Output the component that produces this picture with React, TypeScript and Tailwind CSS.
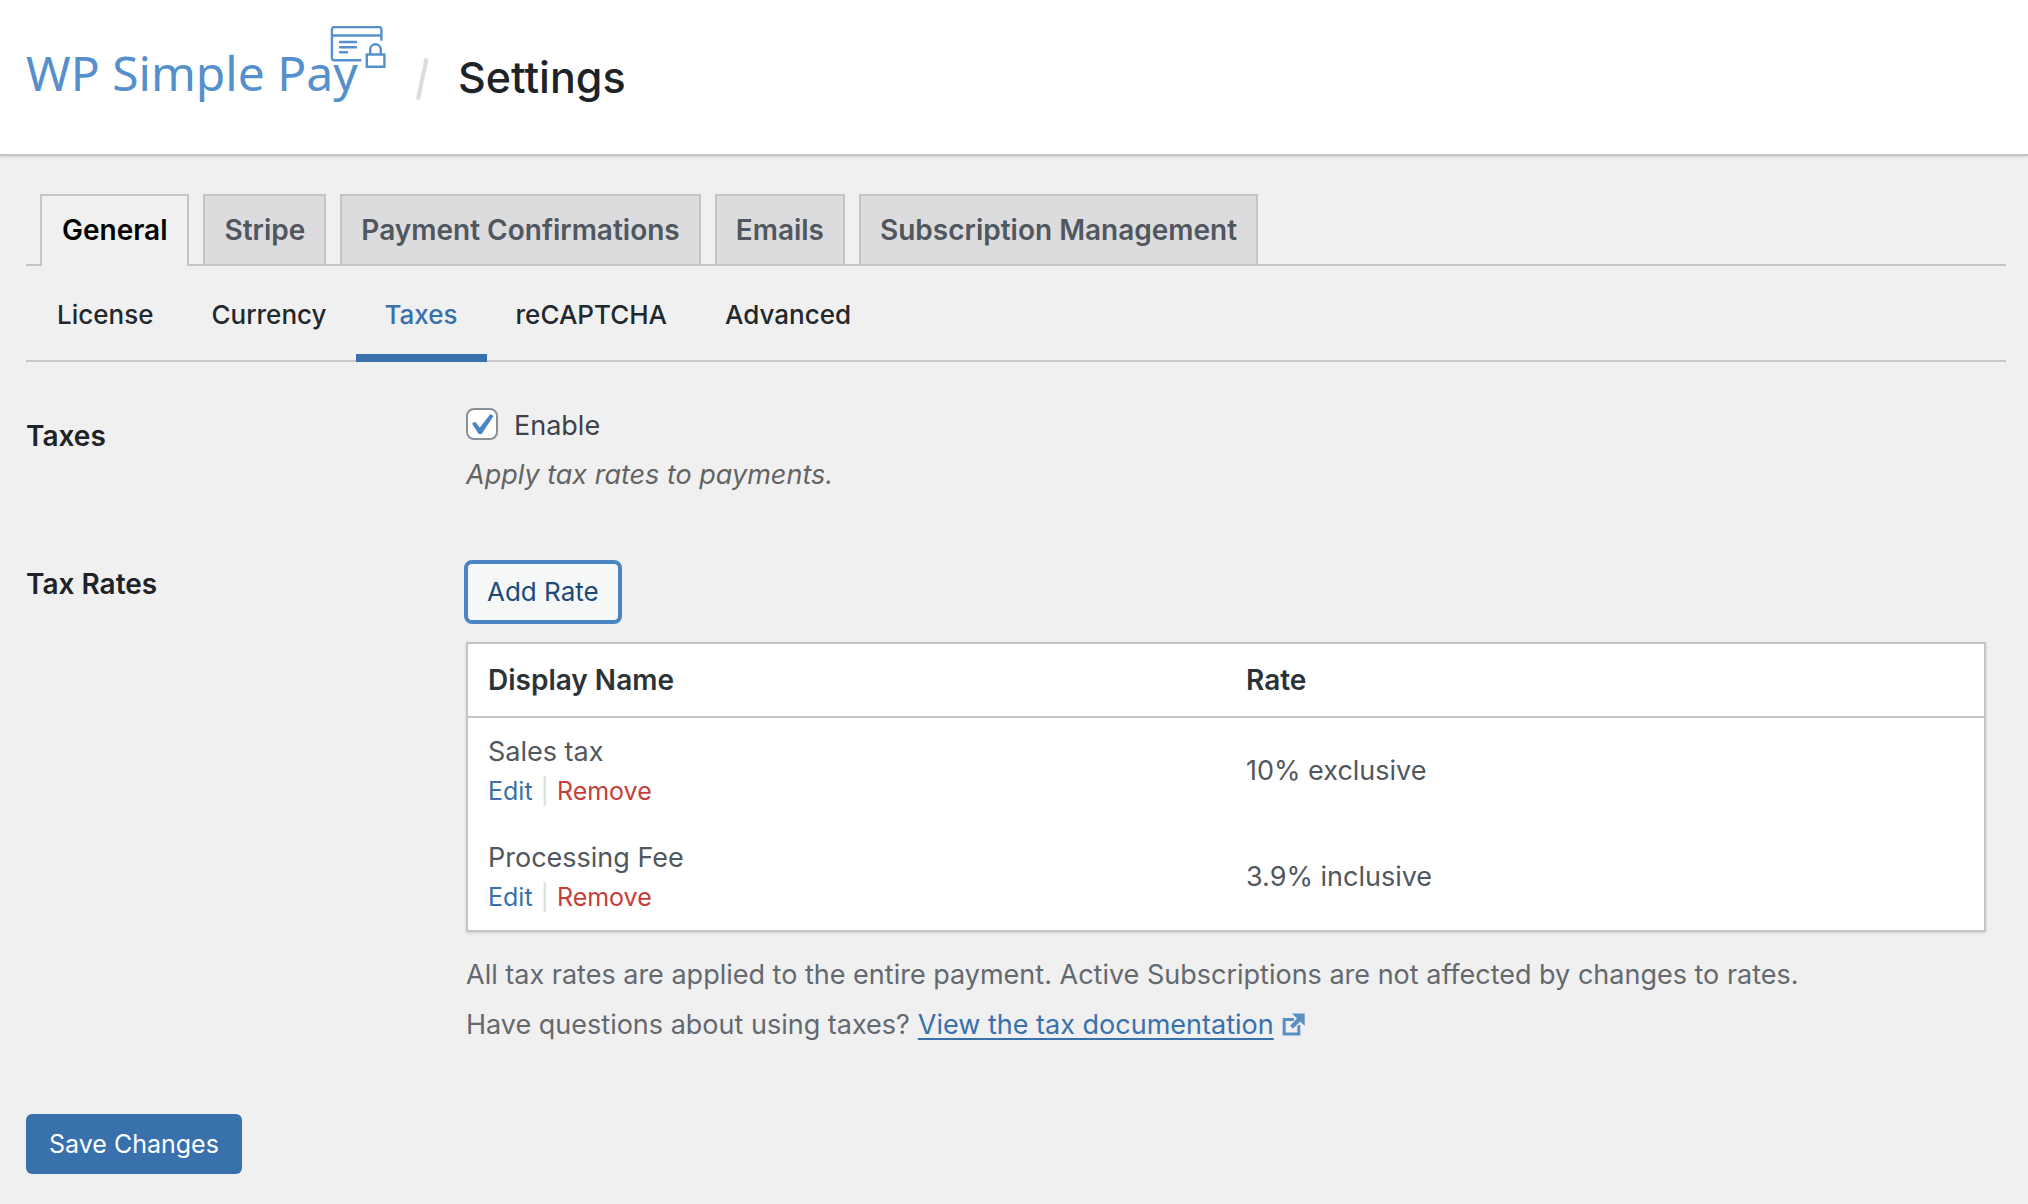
const tabs = ["General", "Stripe", "Payment Confirmations", "Emails", "Subscription Management"];
const sections = ["License", "Currency", "Taxes", "reCAPTCHA", "Advanced"];
const rates = [
  { name: "Sales tax", rate: "10% exclusive" },
  { name: "Processing Fee", rate: "3.9% inclusive" },
];

function CardLockIcon() {
  return (
    <svg
      viewBox="0 0 56 42"
      className="absolute top-[3px] right-0 h-[42px] w-14"
      fill="none"
      stroke="#5590cc"
      strokeWidth="2.4"
      aria-hidden="true"
    >
      <path d="M31.300 34.300H4.400a2.500 2.500 0 0 1-2.500-2.500V3.500a2.500 2.500 0 0 1 2.500-2.500h44.500a2.500 2.500 0 0 1 2.500 2.500V14.700" />
      <path d="M2 9.500h49.400" />
      <path d="M10 16h16M10 21.300h16M10 26.300h7" strokeLinecap="round" />
      <path d="M36.800 28.500h17.600v12.200h-17.600z" />
      <path d="M40.200 28v-4.500a5.300 5.300 0 0 1 10.600 0v4.500" />
    </svg>
  );
}

function ExternalIcon() {
  return (
    <svg viewBox="0 0 24 24" className="h-6 w-6" fill="none" aria-hidden="true">
      <path d="M12 6.500H2.200v14.500h14.600V12" stroke="#5b8fc4" strokeWidth="3" />
      <path
        d="M10 0.500H22.700V13L18.200 8.600L11 15.800L8 12.800L15 5.400z"
        fill="#5b8fc4"
        stroke="#f0f0f0"
        strokeWidth="2"
        paintOrder="stroke"
      />
    </svg>
  );
}

export default function App() {
  return (
    <div className="min-h-screen bg-[#f0f0f0] font-['Inter',sans-serif] text-[27px] leading-10 text-[#3c434a]">
      <header className="flex h-[156px] items-center border-b-2 border-[#c3c4c7] bg-white px-[26px] shadow-sm">
        <div className="relative w-[360px] pt-5 pb-7">
          <span className="block font-['Noto_Sans',sans-serif] text-[48px] leading-[60px] whitespace-nowrap text-[#5590cc]">
            WP Simple Pay
          </span>
          <CardLockIcon />
        </div>
        <svg viewBox="0 0 14 42" className="mt-1 ml-[29px] h-[42px] w-3.5" aria-hidden="true">
          <path d="M3 41.500L11.500 0.500" stroke="#dcdcde" strokeWidth="4" />
        </svg>
        <h1 className="ml-[29px] text-[43px] leading-[56px] font-medium text-[#1d2327]">Settings</h1>
      </header>

      <div className="pr-[22px] pl-[26px]">
        <nav aria-label="Settings" className="mt-[38px] flex gap-3.5 border-b-2 border-[#c3c4c7] pl-3.5">
          {tabs.map((tab, i) => (
            <a
              key={tab}
              href="#"
              aria-current={i === 0 ? "page" : undefined}
              className={
                i === 0
                  ? "-mb-0.5 border-2 border-b-0 border-[#c3c4c7] bg-[#f0f0f0] px-5 pt-[14px] pb-4 text-[28px] font-semibold text-black"
                  : "border-2 border-b-0 border-[#c3c4c7] bg-[#dcdcde] px-[19px] py-[14px] text-[28px] font-semibold text-[#50575e]"
              }
            >
              {tab}
            </a>
          ))}
        </nav>

        <nav aria-label="General settings" className="flex border-b-2 border-[#c9cacc] pl-0.5">
          {sections.map((section) => (
            <a
              key={section}
              href="#"
              className={
                section === "Taxes"
                  ? "-mb-0.5 border-b-8 border-[#3871ac] px-[29px] pt-[29px] pb-[19px] text-[26px] font-medium text-[#3871ac]"
                  : "px-[29px] pt-[29px] pb-[19px] text-[26px] font-medium text-[#23282d]"
              }
            >
              {section}
            </a>
          ))}
        </nav>

        <form>
          <div className="mt-11 grid grid-cols-[440px_1fr]">
            <h2 className="pt-[10px] text-[28px] font-semibold text-[#1d2327]">Taxes</h2>
            <div>
              <div className="flex items-center">
                <span className="relative mr-4 mb-1 block h-8 w-8">
                  <input
                    id="enable-taxes"
                    type="checkbox"
                    defaultChecked
                    className="peer block h-8 w-8 appearance-none rounded-lg border-2 border-[#8c8f94] bg-white"
                  />
                  <svg
                    viewBox="0 0 32 32"
                    className="pointer-events-none absolute inset-0 hidden peer-checked:block"
                    aria-hidden="true"
                  >
                    <path d="M6 15.500L9.200 13.800L13.800 19.500L24.500 6L27.500 8L15.700 26H12.700z" fill="#4a84c4" />
                  </svg>
                </span>
                <label htmlFor="enable-taxes">Enable</label>
              </div>
              <p className="mt-[9px] text-[#646464] italic">Apply tax rates to payments.</p>
            </div>
          </div>

          <div className="mt-[65px] grid grid-cols-[440px_1fr]">
            <h2 className="pt-1 text-[28px] font-semibold text-[#1d2327]">Tax Rates</h2>
            <div>
              <button
                type="button"
                className="-ml-0.5 block rounded-lg border-4 border-[#4a84c4] bg-[#f6f7f7] px-[19px] py-2 text-[26px] text-[#1c4a78]"
              >
                Add Rate
              </button>
              <div className="mt-[18px] mr-5 border-2 border-[#c3c4c7] bg-white shadow-sm">
                <table className="w-full table-fixed border-collapse text-left text-[#50575e]">
                  <thead>
                    <tr className="border-b-2 border-[#c3c4c7] text-[28px] text-[#2c3338]">
                      <th className="px-5 py-4 font-semibold">Display Name</th>
                      <th className="px-5 py-4 font-semibold">Rate</th>
                    </tr>
                  </thead>
                  <tbody>
                    {rates.map((r) => (
                      <tr key={r.name}>
                        <td className="px-5 py-[14px]">
                          <div>{r.name}</div>
                          <div className="flex gap-2 text-[25px] leading-[38px]">
                            <a href="#" className="text-[#3871ac]">Edit</a>
                            <span className="text-[#dddddd]">|</span>
                            <button type="button" className="text-[#c5403b]">Remove</button>
                          </div>
                        </td>
                        <td className="px-5">{r.rate}</td>
                      </tr>
                    ))}
                  </tbody>
                </table>
              </div>
              <p className="mt-[23px] text-[#646970]">
                All tax rates are applied to the entire payment. Active Subscriptions are not affected by changes to rates.
              </p>
              <p className="mt-[10px] flex items-center gap-2 text-[#646970]">
                Have questions about using taxes?
                <a href="#" className="flex items-center gap-2 text-[#3871ac]">
                  <span className="underline decoration-2 underline-offset-4">View the tax documentation</span>
                  <ExternalIcon />
                </a>
              </p>
            </div>
          </div>

          <button type="submit" className="mt-[69px] rounded-md bg-[#3871ac] px-[23px] py-[10px] text-[25px] text-white">
            Save Changes
          </button>
        </form>
      </div>
    </div>
  );
}
